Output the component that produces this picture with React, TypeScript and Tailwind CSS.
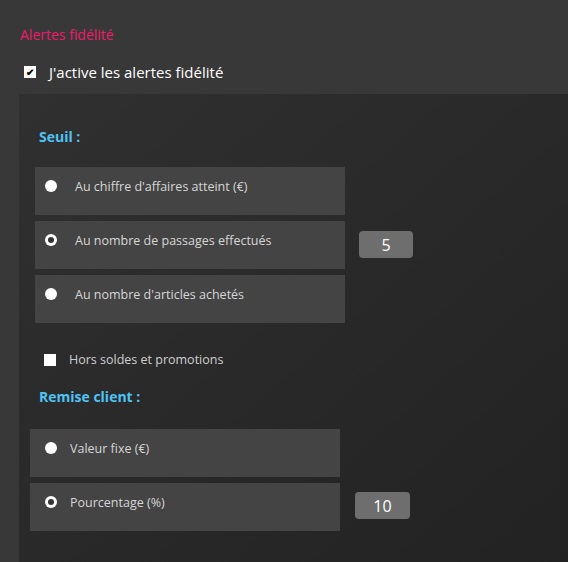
import React from 'react'

const font = { fontFamily: '"Open Sans", "Noto Sans", sans-serif' }

function Radio({ checked }: { checked?: boolean }) {
  return (
    <span className="flex h-[12px] w-[12px] items-center justify-center rounded-full bg-white">
      {checked && <span className="h-[6px] w-[6px] rounded-full bg-[#333]" />}
    </span>
  )
}

function Row({ label, checked, pl, gap }: { label: string; checked?: boolean; pl: string; gap: string }) {
  return (
    <div className={`flex h-[48px] w-[310px] items-start bg-[#444444] pt-[11px] ${pl}`}>
      <span className={`mt-[2px] ${gap}`}>
        <Radio checked={checked} />
      </span>
      <span className="text-[12.5px] text-[#d6d6d6]">{label}</span>
    </div>
  )
}

function Value({ v, w, extra }: { v: string; w: string; extra?: string }) {
  return (
    <div className={`flex h-[27px] items-center justify-center rounded-[4px] bg-[#6e6e6e] text-[16px] text-white ${w} ${extra ?? ''}`}>
      {v}
    </div>
  )
}

export default function App() {
  return (
    <div className="h-[562px] w-[568px] overflow-hidden bg-[#383838]" style={font}>
      <div className="pl-[20px] pt-[24px] text-[14px] text-[#f0196b]">Alertes fidélité</div>
      <div className="flex items-center pl-[24px] pt-[16px]">
        <span className="flex h-[12px] w-[12px] items-center justify-center bg-white text-[10px] font-bold leading-none text-black">✔</span>
        <span className="ml-[13px] text-[15px] text-white">J'active les alertes fidélité</span>
      </div>
      <div className="ml-[19px] mt-[10px] h-[480px] bg-gradient-to-br from-[#303030] to-[#222222] pt-[32px]">
        <div className="pl-[20px] text-[14px] font-bold text-[#4ec3f5]">Seuil :</div>
        <div className="mt-[20px] flex items-center gap-[14px] pl-[16px]">
          <div className="flex flex-col gap-[6px]">
            <Row label="Au chiffre d'affaires atteint (€)" pl="pl-[10px]" gap="mr-[18px]" />
            <Row label="Au nombre de passages effectués" checked pl="pl-[10px]" gap="mr-[18px]" />
            <Row label="Au nombre d'articles achetés" pl="pl-[10px]" gap="mr-[18px]" />
          </div>
          <Value v="5" w="w-[54px]" />
        </div>
        <div className="mt-[28px] flex items-center pl-[25px]">
          <span className="h-[12px] w-[12px] bg-white" />
          <span className="ml-[13px] text-[12.5px] text-[#cfcfcf]">Hors soldes et promotions</span>
        </div>
        <div className="mt-[17px] pl-[20px] text-[14px] font-bold text-[#4ec3f5]">Remise client :</div>
        <div className="mt-[22px] flex items-end gap-[15px] pl-[11px]">
          <div className="flex flex-col gap-[6px]">
            <Row label="Valeur fixe (€)" pl="pl-[15px]" gap="mr-[13px]" />
            <Row label="Pourcentage (%)" checked pl="pl-[15px]" gap="mr-[13px]" />
          </div>
          <Value v="10" w="w-[55px]" extra="mb-[12px]" />
        </div>
      </div>
    </div>
  )
}
